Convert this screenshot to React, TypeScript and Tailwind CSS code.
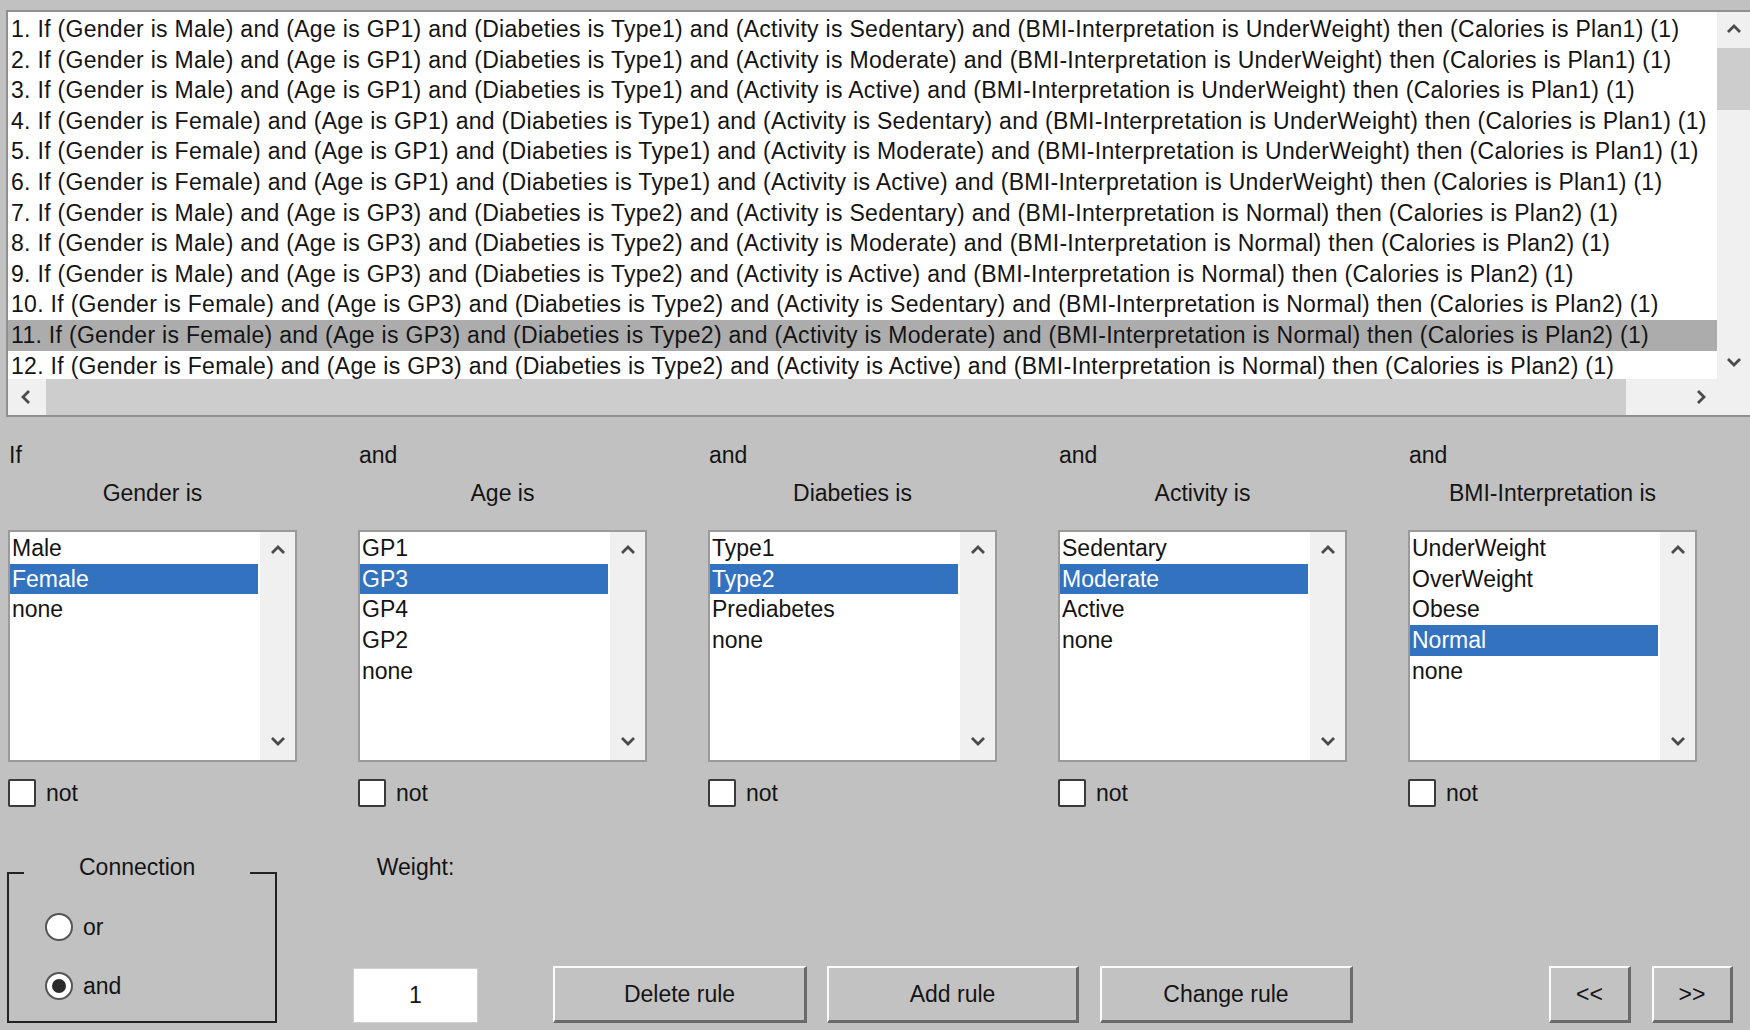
import React from 'react';

const RULES = [
  '1. If (Gender is Male) and (Age is GP1) and (Diabeties is Type1) and (Activity is Sedentary) and (BMI-Interpretation is UnderWeight) then (Calories is Plan1) (1)',
  '2. If (Gender is Male) and (Age is GP1) and (Diabeties is Type1) and (Activity is Moderate) and (BMI-Interpretation is UnderWeight) then (Calories is Plan1) (1)',
  '3. If (Gender is Male) and (Age is GP1) and (Diabeties is Type1) and (Activity is Active) and (BMI-Interpretation is UnderWeight) then (Calories is Plan1) (1)',
  '4. If (Gender is Female) and (Age is GP1) and (Diabeties is Type1) and (Activity is Sedentary) and (BMI-Interpretation is UnderWeight) then (Calories is Plan1) (1)',
  '5. If (Gender is Female) and (Age is GP1) and (Diabeties is Type1) and (Activity is Moderate) and (BMI-Interpretation is UnderWeight) then (Calories is Plan1) (1)',
  '6. If (Gender is Female) and (Age is GP1) and (Diabeties is Type1) and (Activity is Active) and (BMI-Interpretation is UnderWeight) then (Calories is Plan1) (1)',
  '7. If (Gender is Male) and (Age is GP3) and (Diabeties is Type2) and (Activity is Sedentary) and (BMI-Interpretation is Normal) then (Calories is Plan2) (1)',
  '8. If (Gender is Male) and (Age is GP3) and (Diabeties is Type2) and (Activity is Moderate) and (BMI-Interpretation is Normal) then (Calories is Plan2) (1)',
  '9. If (Gender is Male) and (Age is GP3) and (Diabeties is Type2) and (Activity is Active) and (BMI-Interpretation is Normal) then (Calories is Plan2) (1)',
  '10. If (Gender is Female) and (Age is GP3) and (Diabeties is Type2) and (Activity is Sedentary) and (BMI-Interpretation is Normal) then (Calories is Plan2) (1)',
  '11. If (Gender is Female) and (Age is GP3) and (Diabeties is Type2) and (Activity is Moderate) and (BMI-Interpretation is Normal) then (Calories is Plan2) (1)',
  '12. If (Gender is Female) and (Age is GP3) and (Diabeties is Type2) and (Activity is Active) and (BMI-Interpretation is Normal) then (Calories is Plan2) (1)',
];

const INPUTS = [
  { lead: 'If', label: 'Gender is', items: ['Male', 'Female', 'none'], selected: 1 },
  { lead: 'and', label: 'Age is', items: ['GP1', 'GP3', 'GP4', 'GP2', 'none'], selected: 1 },
  { lead: 'and', label: 'Diabeties is', items: ['Type1', 'Type2', 'Prediabetes', 'none'], selected: 1 },
  { lead: 'and', label: 'Activity is', items: ['Sedentary', 'Moderate', 'Active', 'none'], selected: 1 },
  { lead: 'and', label: 'BMI-Interpretation is', items: ['UnderWeight', 'OverWeight', 'Obese', 'Normal', 'none'], selected: 3 },
];

type Dir = 'up' | 'down' | 'left' | 'right';

const Chevron = ({ dir }: { dir: Dir }) => {
  const pts = {
    up: '2,10 8,4 14,10',
    down: '2,5 8,11 14,5',
    left: '10,2 4,8 10,14',
    right: '5,2 11,8 5,14',
  }[dir];
  return (
    <svg width="16" height="16" viewBox="0 0 16 16">
      <polyline points={pts} fill="none" stroke="#4a4a4a" strokeWidth="2.8" />
    </svg>
  );
};

const Button = ({ label, w }: { label: string; w: string }) => (
  <button
    className={`${w} h-[57px] bg-[#c2c2c2] border-t-2 border-l-2 border-t-[#fbfbfb] border-l-[#fbfbfb] border-b-[3px] border-r-[3px] border-b-[#6a6a6a] border-r-[#6a6a6a] text-[23px] text-[#141414] flex items-center justify-center`}
  >
    {label}
  </button>
);

const ListBox = ({ items, selected }: { items: string[]; selected: number }) => (
  <div className="w-[289px] h-[232px] border-2 border-[#9a9a9a] bg-white flex">
    <div className="flex-1 pt-[1px]">
      {items.map((it, i) => (
        <div
          key={it}
          className={`h-[30.7px] leading-[30.7px] pl-[2px] text-[23px] ${
            i === selected ? 'bg-[#3272bf] text-white' : 'text-[#141414]'
          }`}
        >
          {it}
        </div>
      ))}
    </div>
    <div className="w-[35px] ml-[2px] bg-[#f0f0f0] flex flex-col items-center justify-between py-[11px]">
      <Chevron dir="up" />
      <Chevron dir="down" />
    </div>
  </div>
);

export default function App() {
  return (
    <div className="w-[1750px] h-[1030px] overflow-hidden bg-[#c1c1c1] font-['Liberation_Sans',Arial,sans-serif] text-[#141414] flex flex-col">
      {/* Rule list */}
      <div className="ml-[6px] mt-[10px] w-[1744px] h-[407px] border-t-2 border-l-2 border-b-2 border-[#8f8f8f] bg-white grid grid-cols-[1fr_33px] grid-rows-[367px_1fr]">
        <div className="overflow-hidden pt-[2px]">
          {RULES.map((r, i) => (
            <div
              key={r}
              className={`h-[30.6px] leading-[30.6px] pl-[3px] text-[23px] whitespace-nowrap tracking-[0.3px] ${
                i === 10 ? 'bg-[#acacac]' : ''
              }`}
            >
              {r}
            </div>
          ))}
        </div>
        <div className="bg-[#f0f0f0] flex flex-col">
          <div className="h-[36px] flex items-center justify-center">
            <Chevron dir="up" />
          </div>
          <div className="h-[62px] bg-[#cdcdcd]" />
          <div className="flex-1" />
          <div className="h-[34px] flex items-center justify-center">
            <Chevron dir="down" />
          </div>
        </div>
        <div className="bg-[#f0f0f0] flex">
          <div className="w-[38px] flex items-center justify-center">
            <Chevron dir="left" />
          </div>
          <div className="w-[1580px] bg-[#cdcdcd]" />
          <div className="flex-1 flex items-center justify-end pr-[8px]">
            <Chevron dir="right" />
          </div>
        </div>
        <div className="bg-[#f0f0f0]" />
      </div>

      {/* Antecedent columns */}
      <div className="flex pl-[8px] mt-[23px] gap-[61px]">
        {INPUTS.map((c) => (
          <div key={c.label} className="w-[289px] flex flex-col">
            <div className="h-[30px] leading-[30px] pl-[1px] text-[23px]">{c.lead}</div>
            <div className="h-[30px] leading-[30px] mt-[8px] text-[23px] text-center">{c.label}</div>
            <div className="mt-[22px]">
              <ListBox items={c.items} selected={c.selected} />
            </div>
            <div className="mt-[17px] flex items-center h-[28px]">
              <div className="w-[28px] h-[28px] border-2 border-[#3a3a3a] rounded-[2px] bg-white" />
              <span className="ml-[10px] text-[23px]">not</span>
            </div>
          </div>
        ))}
      </div>

      {/* Bottom row */}
      <div className="flex items-end pl-[7px] mt-[47px] h-[169px]">
        <fieldset className="w-[270px] h-[169px] border-2 border-[#222] flex flex-col">
          <legend className="ml-[15px] px-[55px] pb-[12px] leading-[26px] text-[23px]">Connection</legend>
          <div className="pl-[36px] mt-[21px] flex items-center h-[28px]">
            <div className="w-[28px] h-[28px] rounded-full border-2 border-[#555] bg-white" />
            <span className="ml-[10px] text-[23px]">or</span>
          </div>
          <div className="pl-[36px] mt-[31px] flex items-center h-[28px]">
            <div className="w-[28px] h-[28px] rounded-full border-2 border-[#555] bg-white flex items-center justify-center">
              <div className="w-[14px] h-[14px] rounded-full bg-[#2a2a2a]" />
            </div>
            <span className="ml-[10px] text-[23px]">and</span>
          </div>
        </fieldset>

        <div className="ml-[76px] w-[125px] h-[169px] flex flex-col items-center justify-between">
          <div className="h-[26px] leading-[26px] text-[23px]">Weight:</div>
          <div className="w-[125px] h-[55px] bg-white border border-[#d0d0d0] flex items-center justify-center text-[23px]">
            1
          </div>
        </div>

        <div className="ml-[75px] flex items-end">
          <Button label="Delete rule" w="w-[254px]" />
          <div className="ml-[20px]">
            <Button label="Add rule" w="w-[252px]" />
          </div>
          <div className="ml-[21px]">
            <Button label="Change rule" w="w-[253px]" />
          </div>
          <div className="ml-[196px]">
            <Button label="<<" w="w-[82px]" />
          </div>
          <div className="ml-[21px]">
            <Button label=">>" w="w-[81px]" />
          </div>
        </div>
      </div>
    </div>
  );
}
